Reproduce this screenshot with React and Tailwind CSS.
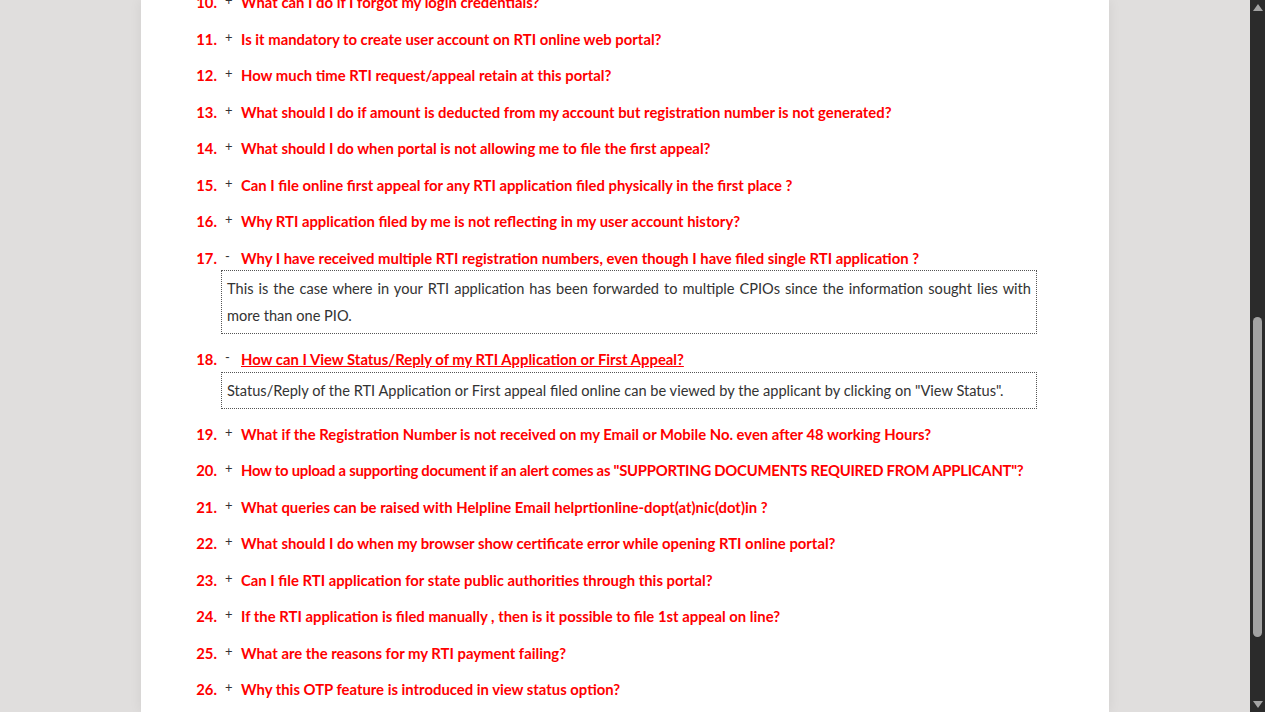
import React from "react";

const faqs = [
  { n: 10, q: "What can I do if I forgot my login credentials?" },
  { n: 11, q: "Is it mandatory to create user account on RTI online web portal?" },
  { n: 12, q: "How much time RTI request/appeal retain at this portal?" },
  { n: 13, q: "What should I do if amount is deducted from my account but registration number is not generated?" },
  { n: 14, q: "What should I do when portal is not allowing me to file the first appeal?" },
  { n: 15, q: "Can I file online first appeal for any RTI application filed physically in the first place ?" },
  { n: 16, q: "Why RTI application filed by me is not reflecting in my user account history?" },
  {
    n: 17,
    q: "Why I have received multiple RTI registration numbers, even though I have filed single RTI application ?",
    a: "This is the case where in your RTI application has been forwarded to multiple CPIOs since the information sought lies with more than one PIO.",
  },
  {
    n: 18,
    q: "How can I View Status/Reply of my RTI Application or First Appeal?",
    a: 'Status/Reply of the RTI Application or First appeal filed online can be viewed by the applicant by clicking on "View Status".',
    active: true,
  },
  { n: 19, q: "What if the Registration Number is not received on my Email or Mobile No. even after 48 working Hours?" },
  { n: 20, q: 'How to upload a supporting document if an alert comes as "SUPPORTING DOCUMENTS REQUIRED FROM APPLICANT"?', tight: true },
  { n: 21, q: "What queries can be raised with Helpline Email helprtionline-dopt(at)nic(dot)in ?" },
  { n: 22, q: "What should I do when my browser show certificate error while opening RTI online portal?" },
  { n: 23, q: "Can I file RTI application for state public authorities through this portal?" },
  { n: 24, q: "If the RTI application is filed manually , then is it possible to file 1st appeal on line?" },
  { n: 25, q: "What are the reasons for my RTI payment failing?" },
  { n: 26, q: "Why this OTP feature is introduced in view status option?" },
];

function FaqItem({ item }) {
  const open = Boolean(item.a);
  return (
    <li className="flex">
      <span className="w-[80px] shrink-0 pr-[4px] text-right font-bold text-[#f00] leading-[22.5px]">
        {item.n}.
      </span>
      <div className="flex-1 min-w-0">
        <div className="flex leading-[22.5px] whitespace-nowrap">
          <span className="w-[20px] shrink-0 pl-[4px] text-[13px] text-[#333] -mt-[2px]">
            {open ? "-" : "+"}
          </span>
          <a
            href="#"
            className={
              "font-bold text-[#f00] " +
              (item.active ? "underline " : "no-underline ") +
              (item.tight ? "tracking-[-0.25px]" : "")
            }
          >
            {item.q}
          </a>
        </div>
        {open && (
          <div className="mt-[1px] border border-dotted border-[#555] px-[5px] py-[4px] text-[14.6px] leading-[27px] text-[#333] text-justify">
            {item.a}
          </div>
        )}
      </div>
    </li>
  );
}

export default function App() {
  return (
    <div className="flex h-[712px] w-full overflow-hidden bg-[#e0dedd] font-['Lato',_'Liberation_Sans',_sans-serif]">
      {/* page area */}
      <div className="flex flex-1 justify-center">
        <div className="w-[968px] bg-white pr-[72px] shadow-[0_0_12px_rgba(0,0,0,0.07)]">
          <ol className="-mt-[9px] flex flex-col gap-[14px] text-[14.85px]">
            {faqs.map((f) => (
              <FaqItem key={f.n} item={f} />
            ))}
          </ol>
        </div>
      </div>

      {/* scrollbar */}
      <div className="flex w-[15px] flex-col items-center justify-between bg-[#2b2b2b] py-[4px]">
        <svg width="10" height="7" viewBox="0 0 10 7">
          <path d="M5 0 L10 7 L0 7 Z" fill="#a3a3a3" />
        </svg>
        <div className="flex flex-1 w-full flex-col px-[3px] pt-[306px] pb-[64px]">
          <div className="flex-1 rounded-full bg-[#a3a3a3]" />
        </div>
        <svg width="10" height="7" viewBox="0 0 10 7">
          <path d="M0 0 L10 0 L5 7 Z" fill="#a3a3a3" />
        </svg>
      </div>
    </div>
  );
}
